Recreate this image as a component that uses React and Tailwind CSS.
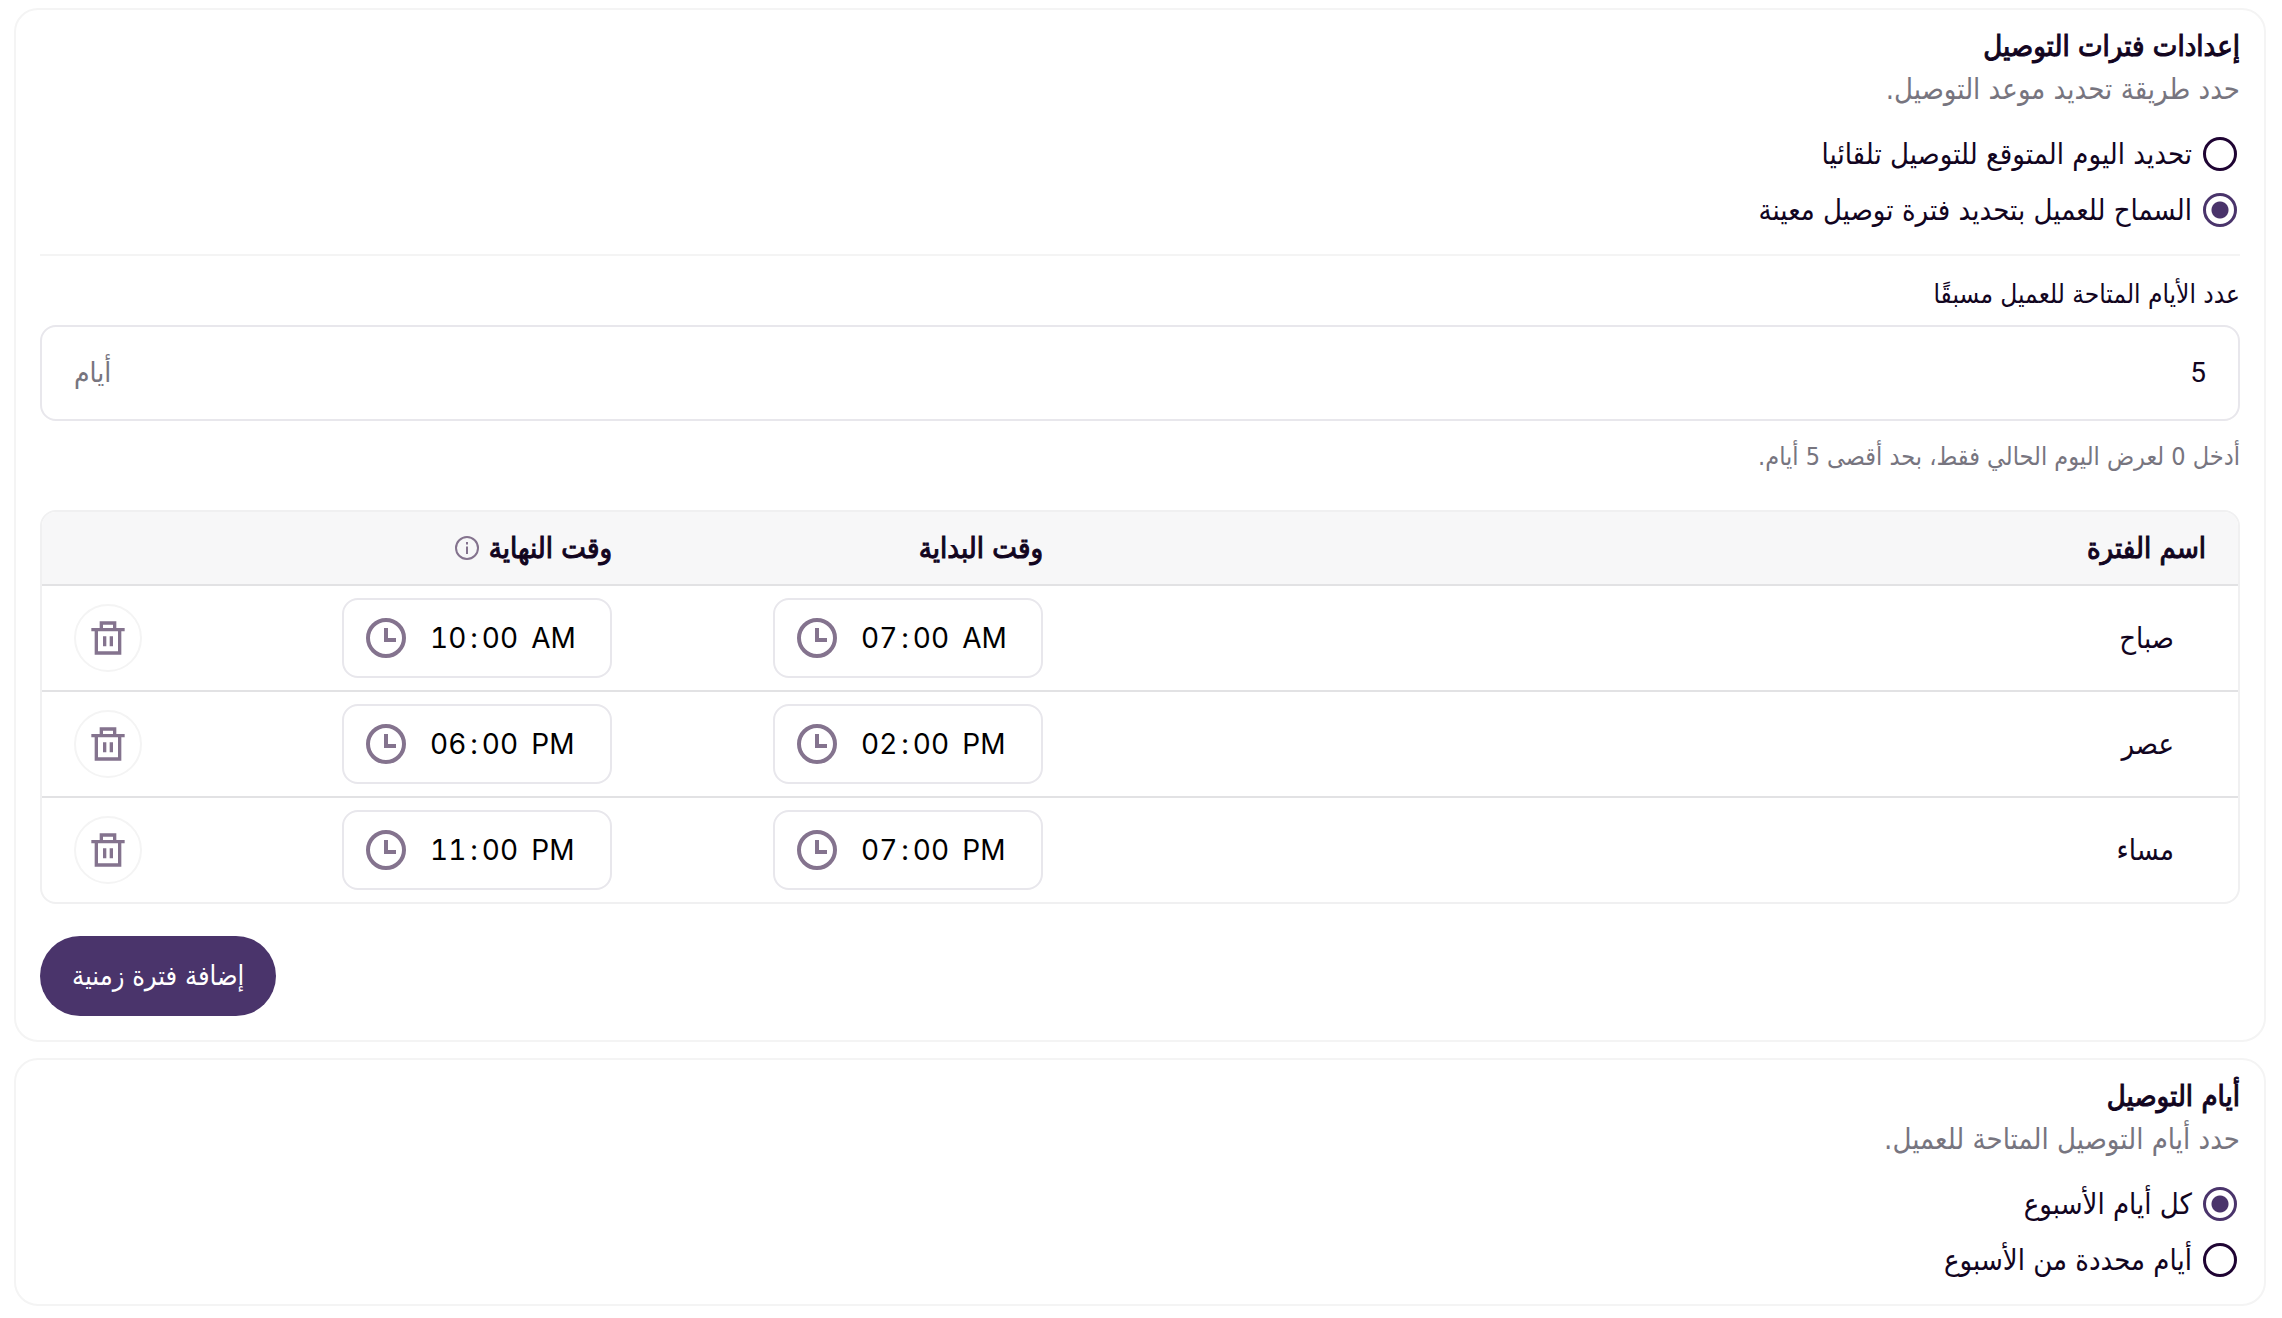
const FONT = "font-['DejaVu_Sans_Condensed','DejaVu_Sans',sans-serif]";
const MEDIUM = 'font-normal [-webkit-text-stroke:1px]';

const periods = [
  { name: 'صباح', start: '07:00', end: '10:00' },
  { name: 'عصر', start: '14:00', end: '18:00' },
  { name: 'مساء', start: '19:00', end: '23:00' },
];

function Radio({ name, label, defaultChecked }) {
  return (
    <label className="flex h-14 cursor-pointer items-center gap-2 text-[29px] leading-10">
      <span className="flex size-10 items-center justify-center">
        <input
          type="radio"
          name={name}
          defaultChecked={defaultChecked}
          className="size-[34px] appearance-none rounded-full border-[3px] border-[#1f0433] bg-white checked:border-[#4a346b] checked:bg-[radial-gradient(circle,#4a346b_8px,transparent_9px)]"
        />
      </span>
      {label}
    </label>
  );
}

function Card({ title, description, children }) {
  return (
    <section className="flex flex-col rounded-3xl border-2 border-[#f4f4f4] px-6">
      <h2 className={`mt-3.5 text-[29px] leading-11 ${MEDIUM}`}>{title}</h2>
      <p className="text-[29px] leading-[42px] text-[#77757f]">{description}</p>
      {children}
    </section>
  );
}

function TimeField({ label, value }) {
  return (
    <div className="flex h-20 w-[270px] items-center justify-end rounded-2xl border-2 border-[#e8e7ec] px-[22px]">
      <input
        type="time"
        dir="ltr"
        lang="en-US"
        aria-label={label}
        defaultValue={value}
        className="w-[184px] bg-transparent pl-5 font-[Inter,sans-serif] text-[28px] leading-10 text-black tabular-nums outline-none [&::-webkit-calendar-picker-indicator]:hidden [&::-webkit-datetime-edit-ampm-field]:px-1 [&::-webkit-datetime-edit-hour-field]:px-1 [&::-webkit-datetime-edit-minute-field]:px-1"
      />
      <svg viewBox="0 0 40 40" className="size-10 shrink-0 fill-none stroke-[#84738e] stroke-[4]" aria-hidden="true">
        <circle cx="20" cy="20" r="18" />
        <path d="M20 10v12h10" />
      </svg>
    </div>
  );
}

function TrashIcon() {
  return (
    <svg viewBox="0 0 24 24" className="size-10 fill-none stroke-[#84738e] stroke-2" aria-hidden="true">
      <path d="M2 7h20M8 7V3h8v4M5 7v14h14V7M10 11v6M14 11v6" />
    </svg>
  );
}

function InfoIcon() {
  return (
    <svg viewBox="0 0 24 24" className="size-6 fill-none stroke-[#84738e] stroke-2" aria-hidden="true">
      <circle cx="12" cy="12" r="11" />
      <path d="M12 10.500v7.500M12 6v2.500" />
    </svg>
  );
}

export default function App() {
  return (
    <main dir="rtl" className={`${FONT} flex min-h-screen flex-col gap-4 bg-white pt-2 pr-4 pb-3 pl-3.5 text-[#12051f]`}>
      <Card title="إعدادات فترات التوصيل" description="حدد طريقة تحديد موعد التوصيل.">
        <fieldset className="mt-4 border-b-2 border-[#f4f4f4] pb-4">
          <Radio name="mode" label="تحديد اليوم المتوقع للتوصيل تلقائيا" />
          <Radio name="mode" label="السماح للعميل بتحديد فترة توصيل معينة" defaultChecked />
        </fieldset>

        <label htmlFor="days" className="mt-5 text-[26px] leading-9">عدد الأيام المتاحة للعميل مسبقًا</label>
        <div className="mt-[13px] flex h-24 items-center rounded-2xl border-2 border-[#e8e7ec] px-8">
          <input id="days" type="text" inputMode="numeric" defaultValue="5" className="min-w-0 flex-1 font-[Roboto,sans-serif] text-[28px] outline-none" />
          <span className="text-[28px] text-[#77757f]">أيام</span>
        </div>
        <p className="mt-4.5 text-[25px] leading-9 text-[#77757f]">أدخل 0 لعرض اليوم الحالي فقط، بحد أقصى 5 أيام.</p>

        <div className="mt-[35px] overflow-hidden rounded-2xl border-2 border-[#f0f0f1]">
          <table className="w-full table-fixed border-separate border-spacing-0 text-[29px]">
            <colgroup>
              <col />
              <col className="w-[431px]" />
              <col className="w-[431px]" />
              <col className="w-[171px]" />
            </colgroup>
            <thead className="bg-[#f7f7f8]">
              <tr className={`h-[74px] leading-10 [&>*]:border-b-2 [&>*]:border-[#e2e2e4] [&>*]:px-8 [&>*]:text-start [&>*]:font-normal ${MEDIUM}`}>
                <th scope="col">اسم الفترة</th>
                <th scope="col">وقت البداية</th>
                <th scope="col">
                  <span className="flex items-center gap-2.5">وقت النهاية <InfoIcon /></span>
                </th>
                <td />
              </tr>
            </thead>
            <tbody className="[&>tr:last-child>td]:border-b-0">
              {periods.map((p) => (
                <tr key={p.name} className="[&>td]:border-b-2 [&>td]:border-[#e2e2e4] [&>td]:px-8 [&>td]:py-3">
                  <td>
                    <input type="text" aria-label="اسم الفترة" defaultValue={p.name} className="block h-20 w-full px-8 text-[29px] outline-none" />
                  </td>
                  <td><TimeField label="وقت البداية" value={p.start} /></td>
                  <td><TimeField label="وقت النهاية" value={p.end} /></td>
                  <td>
                    <button type="button" aria-label="حذف الفترة" className="ms-auto flex size-17 items-center justify-center rounded-full border-2 border-[#f4f4f4]">
                      <TrashIcon />
                    </button>
                  </td>
                </tr>
              ))}
            </tbody>
          </table>
        </div>

        <button type="button" className="mt-8 mb-6 h-20 self-end rounded-full bg-[#4a346b] px-8 text-[27px] text-white">إضافة فترة زمنية</button>
      </Card>

      <Card title="أيام التوصيل" description="حدد أيام التوصيل المتاحة للعميل.">
        <fieldset className="mt-4 pb-4">
          <Radio name="days-mode" label="كل أيام الأسبوع" defaultChecked />
          <Radio name="days-mode" label="أيام محددة من الأسبوع" />
        </fieldset>
      </Card>
    </main>
  );
}
